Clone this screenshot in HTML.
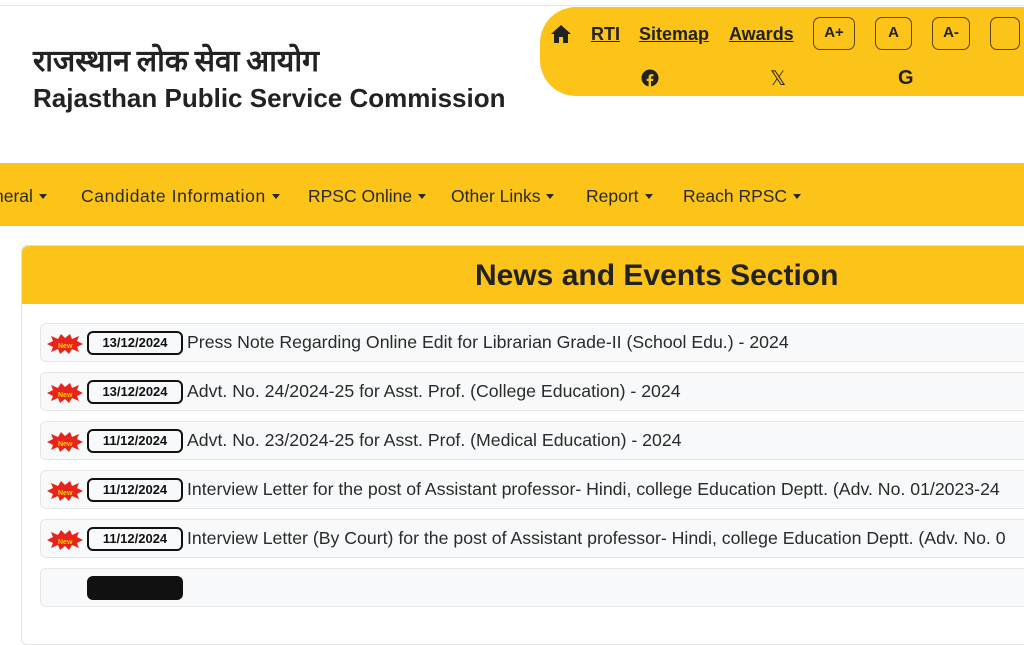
<!DOCTYPE html>
<html><head><meta charset="utf-8"><style>
*{margin:0;padding:0;box-sizing:border-box}
body{width:1024px;height:575px;overflow:hidden;background:#fff;font-family:"Liberation Sans","Noto Sans CJK SC",sans-serif;position:relative;color:#212529}
.topline{position:absolute;left:0;top:5px;width:1024px;height:1px;background:#e6e6e6}
.hi{position:absolute;left:33px;top:36px;font-size:30px;font-weight:bold;color:#222;font-family:"Noto Sans CJK SC","DejaVu Sans",sans-serif}
.en{position:absolute;left:33px;top:83px;font-size:26px;font-weight:bold;color:#222}
.pill{position:absolute;left:540px;top:7px;width:500px;height:89px;background:#fcc419;border-radius:36px 0 0 36px}
.pill a{position:absolute;top:17px;font-size:18px;font-weight:bold;color:#222;text-decoration:underline}
.fb{position:absolute;top:10px;width:42px;height:33px;border:1.5px solid #5a4410;border-radius:7px;font-size:15px;font-weight:bold;text-align:center;line-height:30px;color:#222}
.nav{position:absolute;left:0;top:163px;width:1024px;height:63px;background:#fcc419}
.nav span{position:absolute;top:23px;font-size:17.5px;color:#2a2a2a}
.nav span:after{content:"";display:inline-block;margin-left:6px;vertical-align:3px;border-left:4px solid transparent;border-right:4px solid transparent;border-top:5px solid #2a2a2a}
.card{position:absolute;left:21px;top:245px;width:1020px;height:400px;border:1px solid #e2e2e2;border-radius:6px;background:#fff}
.ch{height:58px;background:#fcc419;border-radius:6px 6px 0 0;font-size:30px;font-weight:bold;line-height:60px;color:#222;padding-left:453px}
.it{position:absolute;left:18px;width:1010px;height:39px;background:#f8f9fa;border:1px solid #e6e6e6;border-radius:6px}
.new{position:absolute;left:6px;top:10px;width:36px;height:20px}
.d{position:absolute;left:46px;top:7px;width:96px;height:24px;border:2px solid #111;border-radius:6px;font-size:13px;font-weight:bold;text-align:center;line-height:20px;color:#111}
.t{position:absolute;left:146px;top:8px;font-size:17.7px;white-space:nowrap;color:#2a2a2a}
</style></head><body>
<div class="topline"></div>
<div class="hi">राजस्थान लोक सेवा आयोग</div>
<div class="en">Rajasthan Public Service Commission</div>
<div class="pill">
<svg style="position:absolute;left:10px;top:17px" width="22" height="20" viewBox="0 0 22 20"><path d="M11 1L1 10h3v9h5v-6h4v6h5v-9h3z" fill="#222"/></svg>
<a style="left:51px">RTI</a><a style="left:99px">Sitemap</a><a style="left:189px">Awards</a>
<div class="fb" style="left:273px">A+</div><div class="fb" style="left:335px;width:37px">A</div><div class="fb" style="left:392px;width:38px">A-</div><div class="fb" style="left:450px;width:30px"></div>
<svg style="position:absolute;left:101px;top:62px" width="18" height="18" viewBox="0 0 18 18"><circle cx="9" cy="9" r="8.5" fill="#222"/><path d="M10 18v-6h2l.4-2.3H10V8.4c0-.7.3-1.1 1.1-1.1h1.4V5.3c-.5-.1-1.2-.2-1.9-.2-1.9 0-3 1.1-3 3.1v1.5H5.7V12h1.9v6z" fill="#fcc419"/></svg>
<div style="position:absolute;left:230px;top:59px;font-size:20px;color:#222">𝕏</div>
<div style="position:absolute;left:358px;top:60px;font-size:20px;font-weight:bold;color:#222">G</div>
</div>
<div class="nav">
<span style="left:-6px">neral</span><span style="left:81px;letter-spacing:0.6px">Candidate Information</span><span style="left:308px">RPSC Online</span><span style="left:451px">Other Links</span><span style="left:586px">Report</span><span style="left:683px">Reach RPSC</span>
</div>
<div class="card">
<div class="ch">News and Events Section</div>
<div class="it" style="top:77px"><svg class="new" viewBox="0 0 36 20"><polygon points="0,10 6,7 4,2 11,5 14,0 18,4 23,0 25,5 32,2 30,7 36,10 30,13 32,18 25,15 22,20 18,16 13,20 11,15 4,18 6,13" fill="#e8231b"/><text x="11" y="14" font-size="7" fill="#ffd400" font-weight="bold" font-family="Liberation Sans">New</text></svg><div class="d">13/12/2024</div><div class="t">Press Note Regarding Online Edit for Librarian Grade-II (School Edu.) - 2024</div></div>
<div class="it" style="top:126px"><svg class="new" viewBox="0 0 36 20"><polygon points="0,10 6,7 4,2 11,5 14,0 18,4 23,0 25,5 32,2 30,7 36,10 30,13 32,18 25,15 22,20 18,16 13,20 11,15 4,18 6,13" fill="#e8231b"/><text x="11" y="14" font-size="7" fill="#ffd400" font-weight="bold" font-family="Liberation Sans">New</text></svg><div class="d">13/12/2024</div><div class="t">Advt. No. 24/2024-25 for Asst. Prof. (College Education) - 2024</div></div>
<div class="it" style="top:175px"><svg class="new" viewBox="0 0 36 20"><polygon points="0,10 6,7 4,2 11,5 14,0 18,4 23,0 25,5 32,2 30,7 36,10 30,13 32,18 25,15 22,20 18,16 13,20 11,15 4,18 6,13" fill="#e8231b"/><text x="11" y="14" font-size="7" fill="#ffd400" font-weight="bold" font-family="Liberation Sans">New</text></svg><div class="d">11/12/2024</div><div class="t">Advt. No. 23/2024-25 for Asst. Prof. (Medical Education) - 2024</div></div>
<div class="it" style="top:224px"><svg class="new" viewBox="0 0 36 20"><polygon points="0,10 6,7 4,2 11,5 14,0 18,4 23,0 25,5 32,2 30,7 36,10 30,13 32,18 25,15 22,20 18,16 13,20 11,15 4,18 6,13" fill="#e8231b"/><text x="11" y="14" font-size="7" fill="#ffd400" font-weight="bold" font-family="Liberation Sans">New</text></svg><div class="d">11/12/2024</div><div class="t">Interview Letter for the post of Assistant professor- Hindi, college Education Deptt. (Adv. No. 01/2023-24</div></div>
<div class="it" style="top:273px"><svg class="new" viewBox="0 0 36 20"><polygon points="0,10 6,7 4,2 11,5 14,0 18,4 23,0 25,5 32,2 30,7 36,10 30,13 32,18 25,15 22,20 18,16 13,20 11,15 4,18 6,13" fill="#e8231b"/><text x="11" y="14" font-size="7" fill="#ffd400" font-weight="bold" font-family="Liberation Sans">New</text></svg><div class="d">11/12/2024</div><div class="t">Interview Letter (By Court) for the post of Assistant professor- Hindi, college Education Deptt. (Adv. No. 0</div></div>
<div class="it" style="top:322px"><div class="d" style="background:#111"></div></div>
</div>
</body></html>
